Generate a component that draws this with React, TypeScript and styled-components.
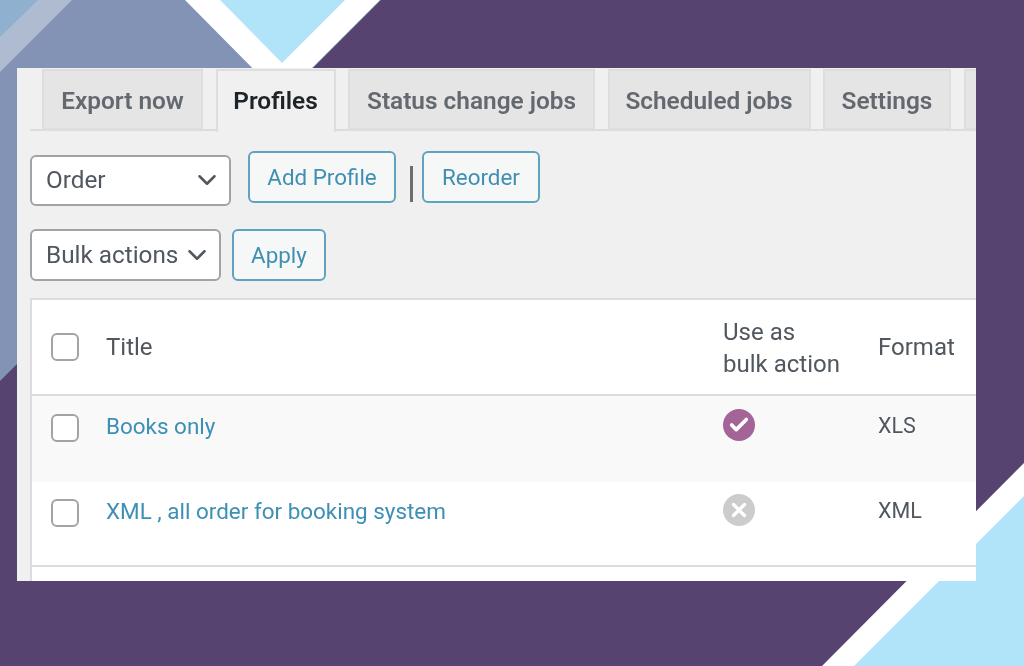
import styled, { createGlobalStyle } from "styled-components";
import { Check, ChevronDown, X } from "lucide-react";

const GlobalStyle = createGlobalStyle`
  html, body {
    margin: 0;
    padding: 0;
    background: #56436f;
  }
  body {
    font-family: Roboto, "Liberation Sans", sans-serif;
  }
`;

const Page = styled.div`
  position: relative;
  width: 1024px;
  height: 666px;
  overflow: hidden;
  padding: 68px 48px 0 17px;
  box-sizing: border-box;
`;

const Backdrop = styled.svg`
  position: absolute;
  inset: 0;
`;

const Panel = styled.div`
  position: relative;
  width: 959px;
  height: 513px;
  background: #f0f0f1;
  overflow: hidden;
`;

// the source is a soft upscaled capture, the content runs past the clip so the blur keeps clean edges
const PanelBody = styled.div`
  width: 990px;
  height: 540px;
  filter: blur(0.7px);
`;

const TabBar = styled.div`
  display: flex;
  gap: 12.5px;
  height: 63px;
  margin-left: 13px;
  padding-left: 12px;
  box-sizing: border-box;
  border-bottom: 2px solid #dcdcde;
`;

const Tab = styled.div<{ $active?: boolean; $width: number }>`
  flex: none;
  width: ${(p) => p.$width}px;
  height: ${(p) => (p.$active ? 63 : 61)}px;
  box-sizing: border-box;
  margin-top: 1px;
  display: flex;
  align-items: center;
  justify-content: center;
  padding: ${(p) => (p.$active ? "0 0 2px" : "2px 0 0")};
  font-size: 24.4px;
  font-weight: 600;
  color: ${(p) => (p.$active ? "#1d2327" : "#646970")};
  background: ${(p) => (p.$active ? "#f0f0f1" : "#e5e5e5")};
  border: 2px solid #dedee0;
  border-bottom: ${(p) => (p.$active ? "none" : "2px solid #dedee0")};
`;

const Controls = styled.div`
  padding: 20px 0 0 13px;
`;

const ControlRow = styled.div<{ $gap: number; $height: number }>`
  display: flex;
  align-items: flex-start;
  gap: ${(p) => p.$gap}px;
  height: ${(p) => p.$height}px;
`;

const Select = styled.div<{ $width: number; $drop?: boolean }>`
  flex: none;
  width: ${(p) => p.$width}px;
  height: 51.5px;
  box-sizing: border-box;
  margin-top: ${(p) => (p.$drop ? 3.5 : 0)}px;
  padding: 0 7px 1px 14px;
  display: flex;
  align-items: center;
  justify-content: space-between;
  font-size: 24.3px;
  color: #50575e;
  background: #fff;
  border: 2px solid #a0a3a7;
  border-radius: 6px;

  svg {
    margin-top: 1px;
  }
`;

const Button = styled.div<{ $width: number }>`
  flex: none;
  width: ${(p) => p.$width}px;
  height: 51.5px;
  box-sizing: border-box;
  display: flex;
  align-items: center;
  justify-content: center;
  font-size: 22.4px;
  color: #3f8fb3;
  background: #f6f7f7;
  border: 2px solid #5fa3bf;
  border-radius: 6px;
`;

const Divider = styled.div`
  flex: none;
  width: 3px;
  height: 36px;
  margin: 15px -8px 0 -3px;
  background: #6b6b70;
`;

const Table = styled.div`
  margin: 17px 0 0 13px;
  background: #fff;
  border: 2px solid #dcdcde;
  border-right: none;
  height: 320px;
`;

const Row = styled.div<{ $height: number; $shaded?: boolean; $ruled?: boolean }>`
  display: grid;
  grid-template-columns: 74px 617px 155px 1fr;
  height: ${(p) => p.$height}px;
  box-sizing: border-box;
  background: ${(p) => (p.$shaded ? "#f9f9f9" : "#fff")};
  border-bottom: ${(p) => (p.$ruled ? "2px solid #dcdcde" : "none")};
`;

const Cell = styled.div<{ $top: number }>`
  padding-top: ${(p) => p.$top}px;
  font-size: 24px;
  line-height: 32px;
  color: #50575e;
`;

const CheckboxCell = styled.div<{ $top: number }>`
  padding: ${(p) => p.$top}px 0 0 18.5px;
`;

const Checkbox = styled.div`
  width: 28px;
  height: 28px;
  box-sizing: border-box;
  background: #fff;
  border: 2px solid #a0a3a7;
  border-radius: 6px;
`;

const RowLink = styled.span`
  font-size: 22.45px;
  color: #3d8fb5;
`;

const StatusDot = styled.div<{ $on: boolean }>`
  width: 32px;
  height: 32px;
  border-radius: 50%;
  display: flex;
  align-items: center;
  justify-content: center;
  color: #fff;
  background: ${(p) => (p.$on ? "#a46497" : "#cccccc")};
`;

const Code = styled.span`
  font-size: 21.5px;
  color: #50575e;
`;

export default function App() {
  return (
    <>
      <GlobalStyle />
      <Page>
        <Backdrop width="1024" height="666" viewBox="0 0 1024 666">
          <polygon points="0,0 381,0 0,381" fill="#8393b5" />
          <polygon points="0,0 72,0 0,72" fill="#aebbd0" />
          <polygon points="0,0 38,0 0,37" fill="#8fb0cf" />
          <polygon points="185,0 380,0 282,98" fill="#ffffff" />
          <polygon points="220,0 345,0 282,63" fill="#b1e4f9" />
          <polygon points="1024,463 1024,666 822,666" fill="#ffffff" />
          <polygon points="1024,496 1024,666 854,666" fill="#b1e4f9" />
        </Backdrop>
        <Panel>
          <PanelBody>
            <TabBar>
              <Tab $width={161}>Export now</Tab>
              <Tab $width={120} $active>
                Profiles
              </Tab>
              <Tab $width={247}>Status change jobs</Tab>
              <Tab $width={203}>Scheduled jobs</Tab>
              <Tab $width={128}>Settings</Tab>
              <Tab $width={60} />
            </TabBar>
            <Controls>
              <ControlRow $gap={17} $height={78}>
                <Select $width={201} $drop>
                  Order
                  <ChevronDown size={30} strokeWidth={2} color="#50575e" />
                </Select>
                <Button $width={148}>Add Profile</Button>
                <Divider />
                <Button $width={118}>Reorder</Button>
              </ControlRow>
              <ControlRow $gap={11} $height={52}>
                <Select $width={191}>
                  Bulk actions
                  <ChevronDown size={30} strokeWidth={2} color="#50575e" />
                </Select>
                <Button $width={94}>Apply</Button>
              </ControlRow>
            </Controls>
            <Table>
              <Row $height={96} $ruled>
                <CheckboxCell $top={33}>
                  <Checkbox />
                </CheckboxCell>
                <Cell $top={31}>Title</Cell>
                <Cell $top={16}>
                  Use as
                  <br />
                  bulk action
                </Cell>
                <Cell $top={31}>Format</Cell>
              </Row>
              <Row $height={86} $shaded>
                <CheckboxCell $top={18}>
                  <Checkbox />
                </CheckboxCell>
                <Cell $top={14}>
                  <RowLink>Books only</RowLink>
                </Cell>
                <Cell $top={13}>
                  <StatusDot $on>
                    <Check size={22} strokeWidth={4} />
                  </StatusDot>
                </Cell>
                <Cell $top={13}>
                  <Code>XLS</Code>
                </Cell>
              </Row>
              <Row $height={85} $ruled>
                <CheckboxCell $top={17}>
                  <Checkbox />
                </CheckboxCell>
                <Cell $top={13}>
                  <RowLink>XML , all order for booking system</RowLink>
                </Cell>
                <Cell $top={12}>
                  <StatusDot $on={false}>
                    <X size={22} strokeWidth={3.5} />
                  </StatusDot>
                </Cell>
                <Cell $top={12}>
                  <Code>XML</Code>
                </Cell>
              </Row>
            </Table>
          </PanelBody>
        </Panel>
      </Page>
    </>
  );
}
